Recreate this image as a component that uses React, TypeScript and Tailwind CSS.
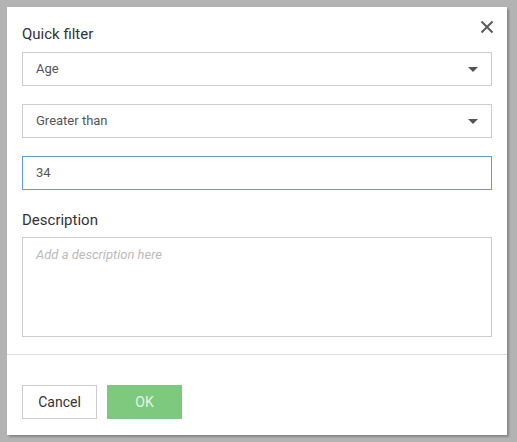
export default function App() {
  return (
    <div
      className="w-[517px] h-[442px] bg-[#b3b3b3] p-[7px] pr-[10px] pb-[7px]"
      style={{ fontFamily: 'Roboto, "Liberation Sans", sans-serif' }}
    >
      <div className="relative w-[500px] h-[428px] bg-white shadow-[2px_2px_2px_rgba(0,0,0,0.25)] flex flex-col">
        {/* Close */}
        <button className="absolute right-[13px] top-[13px] w-[14px] h-[14px] text-[#5a5a5a]">
          <svg viewBox="0 0 14 14" width="14" height="14">
            <path d="M1.5 1.5 L12.5 12.5 M12.5 1.5 L1.5 12.5" stroke="currentColor" strokeWidth="2" />
          </svg>
        </button>

        <div className="px-[15px] pt-[17px]">
          <h2 className="text-[15px] leading-[20px] text-[#333]">Quick filter</h2>

          <div className="mt-[8px] h-[34px] border border-[#ccc] flex items-center justify-between px-[13px]">
            <span className="text-[13px] text-[#555]">Age</span>
            <span className="w-0 h-0 border-l-[5px] border-r-[5px] border-t-[5px] border-l-transparent border-r-transparent border-t-[#555]" />
          </div>

          <div className="mt-[18px] h-[34px] border border-[#ccc] flex items-center justify-between px-[13px]">
            <span className="text-[13px] text-[#555]">Greater than</span>
            <span className="w-0 h-0 border-l-[5px] border-r-[5px] border-t-[5px] border-l-transparent border-r-transparent border-t-[#555]" />
          </div>

          <div className="mt-[18px] h-[34px] border border-[#5b9dd9] flex items-center px-[13px]">
            <span className="text-[13px] text-[#555]">34</span>
          </div>

          <h3 className="mt-[20px] text-[15px] leading-[20px] text-[#333]">Description</h3>

          <div className="mt-[7px] h-[100px] border border-[#ccc] px-[13px] pt-[9px]">
            <span className="block text-[13px] leading-[16px] italic text-[#bbb]">Add a description here</span>
          </div>
        </div>

        <div className="mt-[17px] border-t border-[#ddd]" />

        <div className="px-[15px] pt-[30px] flex gap-[10px]">
          <button className="w-[75px] h-[34px] border border-[#ccc] bg-white text-[14px] text-[#333]">
            Cancel
          </button>
          <button className="w-[75px] h-[34px] bg-[#7dc97e] text-[14px] text-white/80">
            OK
          </button>
        </div>
      </div>
    </div>
  );
}
